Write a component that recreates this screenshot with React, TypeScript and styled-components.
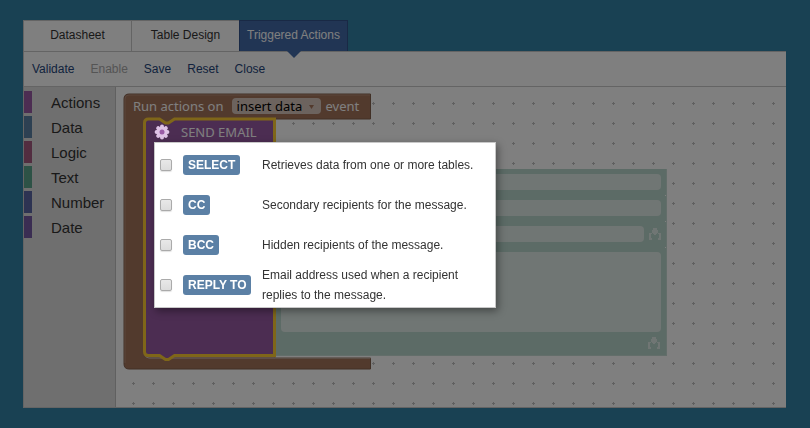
import React from "react";
import styled, { createGlobalStyle, css } from "styled-components";

const GlobalStyle = createGlobalStyle`
  *, *::before, *::after { box-sizing: border-box; }
  body {
    margin: 0;
    background: #3383a7;
    color: #333;
    font: 12px/20px "Liberation Sans", Arial, sans-serif;
  }
  button, input, select, textarea { font: inherit; margin: 0; }
`;

const blockFont = `"Noto Sans", "DejaVu Sans", sans-serif`;

const Page = styled.div`
  display: flex;
  flex-direction: column;
  min-height: 100vh;
  padding: 20px 24px 20px 23px;
`;

const Tabs = styled.nav`
  display: flex;
  height: 31px;
`;

const Tab = styled.button<{ $active?: boolean }>`
  position: relative;
  width: 108px;
  padding: 0 0 2px;
  border: 1px solid #c8c8c8;
  border-width: 1px 0 0 1px;
  background: #fff;
  color: #333;
  white-space: nowrap;
  ${(p) =>
    p.$active &&
    css`
      width: 109px;
      border-color: #33528a;
      border-right-width: 1px;
      background: #436ba9;
      color: #fff;
      &::after {
        content: "";
        position: absolute;
        top: 100%;
        left: 50%;
        margin-left: -7px;
        border: 7px solid transparent;
        border-top-color: #436ba9;
        border-bottom: 0;
      }
    `}
`;

const Panel = styled.main`
  display: flex;
  flex: 1;
  flex-direction: column;
  border: 1px solid #c8c8c8;
  border-right: 0;
  background: #fff;
`;

const Toolbar = styled.div`
  display: flex;
  align-items: center;
  gap: 16px;
  height: 35px;
  padding-left: 8px;
  border-bottom: 1px solid #c8c8c8;
`;

const ToolButton = styled.button`
  padding: 0;
  border: 0;
  background: none;
  color: #24457a;
  &:disabled { color: #aaa; }
`;

const Editor = styled.div`
  display: flex;
  flex: 1;
`;

const Toolbox = styled.aside`
  display: flex;
  flex-direction: column;
  gap: 3px;
  width: 92px;
  padding-top: 4px;
  border-right: 1px solid #c0c0c0;
  background: #dfdfdf;
`;

const Category = styled.button<{ $color: string }>`
  height: 22px;
  padding: 2px 0 0 19px;
  border: 0;
  border-left: 8px solid ${(p) => p.$color};
  background: none;
  color: #333;
  font-size: 15px;
  line-height: 20px;
  text-align: left;
`;

const Workspace = styled.section`
  position: relative;
  flex: 1;
  min-width: 0;
  background: #fff;
`;

const GridDots = styled.svg`
  position: absolute;
  inset: 0;
  width: 100%;
  height: 100%;
`;

const EventBlock = styled.div`
  position: relative;
  width: 544px;
  height: 278px;
  margin: 6px 0 0 7px;
  font-family: ${blockFont};
`;

const BlockOutline = styled.svg`
  position: absolute;
  top: 0;
  left: 0;
`;

const EventHeader = styled.div`
  position: relative;
  display: flex;
  align-items: center;
  height: 26px;
  padding-left: 10px;
  color: #fff;
  font-size: 13px;
`;

const FieldSelectWrap = styled.span`
  display: flex;
  position: relative;
  margin: 0 5px 0 8px;
  svg {
    position: absolute;
    top: 6px;
    right: 7px;
    pointer-events: none;
  }
`;

const FieldSelect = styled.select`
  appearance: none;
  width: 89px;
  height: 16px;
  padding: 0 0 0 5px;
  border: 0;
  border-radius: 4px;
  background: #d9c7bd;
  color: #000;
  line-height: 16px;
`;

const Statement = styled.div`
  position: relative;
  display: flex;
  align-items: flex-start;
  margin-left: 21px;
`;

const StatementBody = styled.div`
  width: 132px;
  padding: 4px 0 0 10px;
`;

const StatementTitle = styled.div`
  display: flex;
  align-items: center;
  gap: 11px;
  height: 18px;
  color: #fff;
  font-size: 13px;
`;

const GearButton = styled.button`
  display: flex;
  position: relative;
  z-index: 2;
  padding: 0;
  border: 0;
  background: none;
`;

const seam = "linear-gradient(#fff, #fff)";

const Values = styled.form`
  display: flex;
  flex: 1;
  flex-direction: column;
  gap: 10px;
  margin-top: 50px;
  padding: 5px 5px 6px 5px;
  border: solid #c6ddd5;
  border-width: 0 1px 1px 0;
  background:
    ${seam} right 26px / 1px 1px no-repeat,
    ${seam} right 52px / 1px 1px no-repeat,
    ${seam} right 78px / 1px 1px no-repeat,
    #b9d6cc;
`;

const ValueRow = styled.div`
  display: flex;
  align-items: center;
  gap: 5px;
  height: 16px;
`;

const ValueInput = styled.input`
  flex: 1;
  min-width: 0;
  height: 16px;
  padding: 0 4px;
  border: 0;
  border-radius: 4px;
  background: #e1ece8;
`;

const ValueArea = styled.textarea`
  display: block;
  height: 80px;
  padding: 4px;
  border: 0;
  border-radius: 4px;
  background: #e1ece8;
  resize: none;
`;

const AreaFooter = styled.div`
  display: flex;
  justify-content: flex-end;
  height: 12px;
  margin-top: -5px;
  padding-right: 1px;
`;

const Overlay = styled.div`
  position: fixed;
  inset: 0;
  z-index: 1;
  background: rgba(0, 0, 0, 0.5);
`;

const Popup = styled.div`
  position: absolute;
  top: 23px;
  left: 10px;
  z-index: 3;
  width: 342px;
  padding: 2px 6px 2px 5px;
  border: 1px solid #c8c8c8;
  background: #fff;
  box-shadow: 2px 3px 8px rgba(0, 0, 0, 0.4);
  font-family: "Liberation Sans", Arial, sans-serif;
`;

const Option = styled.label`
  display: grid;
  grid-template-columns: 23px 79px 1fr;
  align-items: center;
  height: 40px;
`;

const CheckBox = styled.input`
  appearance: none;
  width: 12px;
  height: 12px;
  border: 1px solid #aaa;
  border-radius: 2px;
  background: linear-gradient(#e8e8e8, #dcdcdc);
  box-shadow: 0 1px 1px rgba(0, 0, 0, 0.12);
`;

const Badge = styled.span`
  justify-self: start;
  padding: 0 5px;
  border-radius: 3px;
  background: #5b80a5;
  color: #fff;
  font-weight: bold;
  white-space: nowrap;
`;

const OptionText = styled.span`
  max-width: 215px;
`;

const categories = [
  { name: "Actions", color: "#995ba5" },
  { name: "Data", color: "#5b80a5" },
  { name: "Logic", color: "#a55b80" },
  { name: "Text", color: "#5ba58c" },
  { name: "Number", color: "#5b67a5" },
  { name: "Date", color: "#745ba5" },
];

const options = [
  { name: "SELECT", text: "Retrieves data from one or more tables." },
  { name: "CC", text: "Secondary recipients for the message." },
  { name: "BCC", text: "Hidden recipients of the message." },
  { name: "REPLY TO", text: "Email address used when a recipient replies to the message." },
];

function InsertIcon() {
  return (
    <svg width="12" height="12" viewBox="0 0 12 12" fill="#e1ece8" aria-hidden="true">
      <path d="M4 0h4v2h1v3H8v1H7v1H5V6H4V5H3V2h1z" />
      <path d="M0 5h3v1H2v4h1v2H0zM12 5H9v1h1v4H9v2h3z" />
    </svg>
  );
}

function GearIcon() {
  const petals = [0, 45, 90, 135, 180, 225, 270, 315];
  return (
    <svg width="16" height="16" viewBox="0 0 16 16" aria-hidden="true">
      <g fill="#dfc3e6">
        <circle cx="8" cy="8" r="5.6" />
        {petals.map((a) => (
          <circle key={a} cx="8" cy="2.6" r="2" transform={`rotate(${a} 8 8)`} />
        ))}
      </g>
      <circle cx="8" cy="8" r="2.500" fill="#995ba5" />
    </svg>
  );
}

function Outline() {
  return (
    <BlockOutline width="250" height="280" viewBox="0 0 250 280" aria-hidden="true">
      <path
        d="M1 6Q1 1 6 1H247.5V26H152V265H247.5V276H6Q1 276 1 271Z"
        fill="#a5745b"
        stroke="#83604d"
      />
      <path d="M2 270V6Q2 2 6 2H247" fill="none" stroke="#b58c78" />
      <path d="M22 261Q22 265 26 265H247.500" fill="none" stroke="#d5c5bd" />
      <path
        d="M21.5 30Q21.5 26 25.5 26H36.5l6 4h3l6-4H151.500V262.5H51.5l-6 4h-3l-6-4H25.5Q21.5 262.5 21.5 258.5Z"
        fill="#995ba5"
        stroke="#fc3"
        strokeWidth="3"
      />
    </BlockOutline>
  );
}

export default function App() {
  return (
    <>
      <GlobalStyle />
      <Page>
        <Tabs>
          <Tab>Datasheet</Tab>
          <Tab>Table Design</Tab>
          <Tab $active aria-current="page">Triggered Actions</Tab>
        </Tabs>
        <Panel>
          <Toolbar>
            <ToolButton>Validate</ToolButton>
            <ToolButton disabled>Enable</ToolButton>
            <ToolButton>Save</ToolButton>
            <ToolButton>Reset</ToolButton>
            <ToolButton>Close</ToolButton>
          </Toolbar>
          <Editor>
            <Toolbox>
              {categories.map((c) => (
                <Category key={c.name} $color={c.color}>{c.name}</Category>
              ))}
            </Toolbox>
            <Workspace>
              <GridDots aria-hidden="true">
                <defs>
                  <pattern id="dots" x="7" y="6" width="20" height="20" patternUnits="userSpaceOnUse">
                    <path d="M9 10.5h3M10.5 9v3" stroke="#c0c0c0" />
                  </pattern>
                </defs>
                <rect width="100%" height="100%" fill="url(#dots)" />
              </GridDots>
              <EventBlock>
                <Outline />
                <EventHeader>
                  <span>Run actions on</span>
                  <FieldSelectWrap>
                    <FieldSelect aria-label="Event" defaultValue="insert data">
                      <option>insert data</option>
                    </FieldSelect>
                    <svg width="5" height="5" viewBox="0 0 5 5" aria-hidden="true">
                      <path d="M0 1h5L2.5 5z" fill="#a5745b" />
                    </svg>
                  </FieldSelectWrap>
                  <span>event</span>
                </EventHeader>
                <Statement>
                  <StatementBody>
                    <StatementTitle>
                      <GearButton aria-label="Configure">
                        <GearIcon />
                      </GearButton>
                      <span>SEND EMAIL</span>
                    </StatementTitle>
                  </StatementBody>
                  <Values>
                    <ValueRow>
                      <ValueInput aria-label="Recipient" />
                    </ValueRow>
                    <ValueRow>
                      <ValueInput aria-label="Subject" />
                    </ValueRow>
                    <ValueRow>
                      <ValueInput aria-label="Sender" />
                      <InsertIcon />
                    </ValueRow>
                    <ValueArea aria-label="Message" />
                    <AreaFooter>
                      <InsertIcon />
                    </AreaFooter>
                  </Values>
                  <Popup role="dialog" aria-label="Options">
                    {options.map((o) => (
                      <Option key={o.name}>
                        <CheckBox type="checkbox" />
                        <Badge>{o.name}</Badge>
                        <OptionText>{o.text}</OptionText>
                      </Option>
                    ))}
                  </Popup>
                </Statement>
              </EventBlock>
            </Workspace>
          </Editor>
        </Panel>
      </Page>
      <Overlay />
    </>
  );
}
